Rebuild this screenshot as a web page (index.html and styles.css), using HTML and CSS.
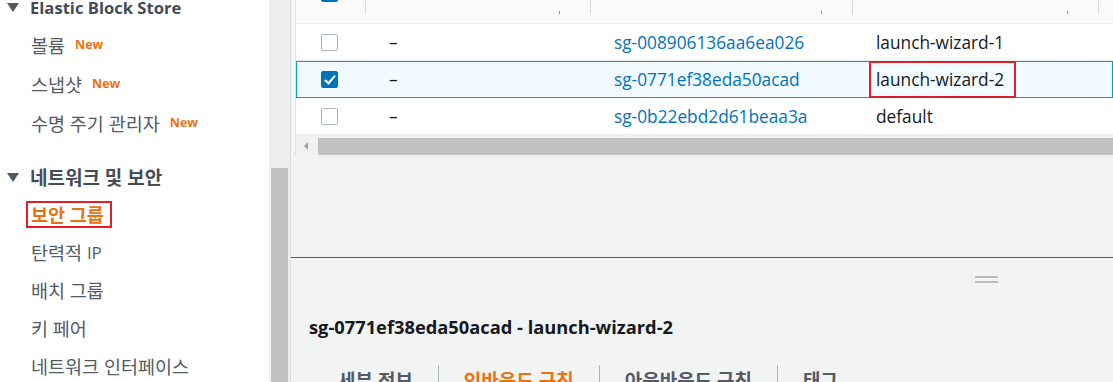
FILE: index.html
```html
<!DOCTYPE html>
<html>
<head>
    <title>보안 그룹 | EC2 Management Console</title>
    <meta charset="UTF-8">
    <meta name="viewport" content="width=device-width, initial-scale=1.0">
    <link rel="stylesheet" href="styles.css">
</head>
<body>
    <div class="layout">
        <nav class="nav">
            <div class="nav-section first">
                <div class="nav-head"><span class="caret"></span><span class="latin">Elastic Block Store</span></div>
                <a class="nav-item">볼륨 <span class="badge">New</span></a>
                <a class="nav-item">스냅샷 <span class="badge">New</span></a>
                <a class="nav-item">수명 주기 관리자 <span class="badge">New</span></a>
            </div>
            <div class="nav-section">
                <div class="nav-head"><span class="caret"></span>네트워크 및 보안</div>
                <a class="nav-item active"><span class="mark">보안 그룹</span></a>
                <a class="nav-item">탄력적&nbsp;<span class="latin">IP</span></a>
                <a class="nav-item">배치 그룹</a>
                <a class="nav-item">키 페어</a>
                <a class="nav-item">네트워크 인터페이스</a>
            </div>
        </nav>
        <div class="nav-scroll"><div class="nav-thumb"></div></div>

        <main class="main">
            <div class="table-area">
                <div class="table">
                    <div class="row head">
                        <div class="cell"><span class="check checked"></span></div>
                        <div class="cell"><span class="head-text">Name</span><span class="sort"></span></div>
                        <div class="cell"><span class="head-text">보안 그룹 ID</span><span class="sort"></span></div>
                        <div class="cell"><span class="head-text">보안 그룹 이름</span><span class="sort"></span></div>
                        <div class="cell"></div>
                    </div>
                    <div class="row">
                        <div class="cell"><span class="check"></span></div>
                        <div class="cell">–</div>
                        <div class="cell"><a class="link">sg-008906136aa6ea026</a></div>
                        <div class="cell">launch-wizard-1</div>
                        <div class="cell"></div>
                    </div>
                    <div class="row selected">
                        <div class="cell"><span class="check checked"></span></div>
                        <div class="cell">–</div>
                        <div class="cell"><a class="link">sg-0771ef38eda50acad</a></div>
                        <div class="cell"><span class="mark-cell">launch-wizard-2</span></div>
                        <div class="cell"></div>
                    </div>
                    <div class="row">
                        <div class="cell"><span class="check"></span></div>
                        <div class="cell">–</div>
                        <div class="cell"><a class="link">sg-0b22ebd2d61beaa3a</a></div>
                        <div class="cell">default</div>
                        <div class="cell"></div>
                    </div>
                </div>
                <div class="hscroll">
                    <span class="arrow"></span>
                    <div class="hthumb"></div>
                </div>
            </div>

            <div class="split">
                <div class="handle"></div>
                <h2 class="split-title">sg-0771ef38eda50acad - launch-wizard-2</h2>
                <div class="tabs">
                    <div class="tab">세부 정보</div>
                    <div class="tab active">인바운드 규칙</div>
                    <div class="tab">아웃바운드 규칙</div>
                    <div class="tab">태그</div>
                </div>
            </div>
        </main>
    </div>
</body>
</html>
```

FILE: styles.css
```css
body {
    font-family: "Open Sans", "Noto Sans CJK KR", sans-serif;
    margin: 0;
    padding: 0;
    color: #16191f;
    overflow: hidden;
}
.layout {
    display: flex;
    height: 382px;
}

/* side navigation */
.nav {
    width: 269px;
    flex: none;
    background-color: #ffffff;
    overflow: hidden;
}
.nav-section.first {
    margin-top: -4px;
    margin-bottom: 24px;
}
.nav-head {
    display: flex;
    align-items: center;
    height: 22px;
    margin-bottom: 7px;
    font-size: 19px;
    font-weight: bold;
    color: #444c56;
}
.nav-head .latin {
    font-size: 16.6px;
}
.caret {
    width: 0;
    height: 0;
    margin: 0 11px 0 7px;
    border-left: 6px solid transparent;
    border-right: 6px solid transparent;
    border-top: 9px solid #545b64;
}
.nav-item {
    display: flex;
    align-items: center;
    height: 38px;
    padding-left: 31px;
    font-size: 18.5px;
    color: #545b64;
    white-space: nowrap;
}
.nav-item .latin {
    font-size: 17px;
}
.first .nav-item {
    height: 39px;
}
.badge {
    margin-left: 10px;
    font-size: 12.5px;
    font-weight: bold;
    color: #ec7211;
}
.nav-item.active {
    color: #ec7211;
    font-weight: bold;
}
.mark {
    display: inline-block;
    line-height: 23px;
    margin-left: -5px;
    padding: 0 6px 0 3px;
    border: 2px solid #e41e26;
}
.nav-scroll {
    width: 21px;
    flex: none;
    background-color: #eeeeee;
}
.nav-thumb {
    margin: 168px 0 0 2px;
    width: 17px;
    height: 214px;
    background-color: #c1c1c1;
}

/* main content */
.main {
    flex: 1;
    display: flex;
    flex-direction: column;
    border-left: 1px solid #d5dbdb;
    background-color: #f2f3f3;
    min-width: 0;
}
.table-area {
    height: 157px;
    margin-left: 4px;
    border-left: 1px solid #e1e4e4;
    background-color: #ffffff;
    flex: none;
}
.row {
    display: grid;
    grid-template-columns: 69px 225px 262px 246px 1fr;
    height: 37px;
    box-sizing: border-box;
    border-bottom: 1px solid #eaeded;
    font-size: 17.3px;
}
.row.head {
    height: 24px;
    background-color: #fafafa;
    font-weight: bold;
    color: #545b64;
}
.row.selected {
    background-color: #f1faff;
    outline: 1px solid #00a1c9;
    outline-offset: -1px;
}
.cell {
    position: relative;
    display: flex;
    align-items: center;
    padding-left: 24px;
    white-space: nowrap;
}
.cell:first-child {
    padding-left: 25px;
}
.head .cell {
    align-items: flex-start;
}
.head .cell + .cell::before {
    content: "";
    position: absolute;
    left: 0;
    top: 0;
    width: 1px;
    height: 14px;
    background-color: #d5dbdb;
}
.head-text {
    margin-top: -20px;
    line-height: 22px;
}
.head .check {
    margin-top: -15px;
}
.sort {
    position: absolute;
    right: 30px;
    top: 11px;
    width: 1px;
    height: 3px;
    background-color: #879596;
}
.check {
    width: 17px;
    height: 17px;
    box-sizing: border-box;
    border: 1px solid #aab7b8;
    border-radius: 2px;
    background-color: #ffffff;
}
.check.checked {
    border-color: #0073bb;
    background-color: #0073bb;
    position: relative;
}
.check.checked::after {
    content: "";
    position: absolute;
    left: 5px;
    top: 1px;
    width: 4px;
    height: 9px;
    border-right: 2px solid #ffffff;
    border-bottom: 2px solid #ffffff;
    transform: rotate(40deg);
}
.link {
    color: #0073bb;
}
.mark-cell {
    display: flex;
    align-items: center;
    height: 37px;
    box-sizing: border-box;
    margin-left: -7px;
    padding: 0 10px 0 5px;
    border: 2px solid #e41e26;
}
.hscroll {
    display: flex;
    align-items: center;
    height: 22px;
    background-color: #f1f1f1;
}
.arrow {
    width: 0;
    height: 0;
    margin: 0 10px 0 8px;
    border-top: 4px solid transparent;
    border-bottom: 4px solid transparent;
    border-right: 4px solid #a3a3a3;
}
.hthumb {
    flex: 1;
    height: 17px;
    margin-top: 1px;
    background-color: #c1c1c1;
}

/* split panel */
.split {
    margin-top: auto;
    height: 125px;
    box-sizing: border-box;
    border-top: 1px solid #545b64;
    overflow: hidden;
}
.handle {
    width: 23px;
    height: 3px;
    margin: 18px 0 0 684px;
    border-top: 2px solid #b5bdbe;
    border-bottom: 2px solid #b5bdbe;
}
.split-title {
    margin: 32px 0 0 18px;
    font-size: 18.3px;
    line-height: 24px;
    font-weight: bold;
}
.tabs {
    display: flex;
    margin: 26px 0 0 22px;
}
.tab {
    padding: 0 25px;
    line-height: 32px;
    font-size: 19px;
    font-weight: bold;
    color: #545b64;
}
.tab + .tab {
    border-left: 1px solid #aab7b8;
}
.tab.active {
    color: #ec7211;
}
```
